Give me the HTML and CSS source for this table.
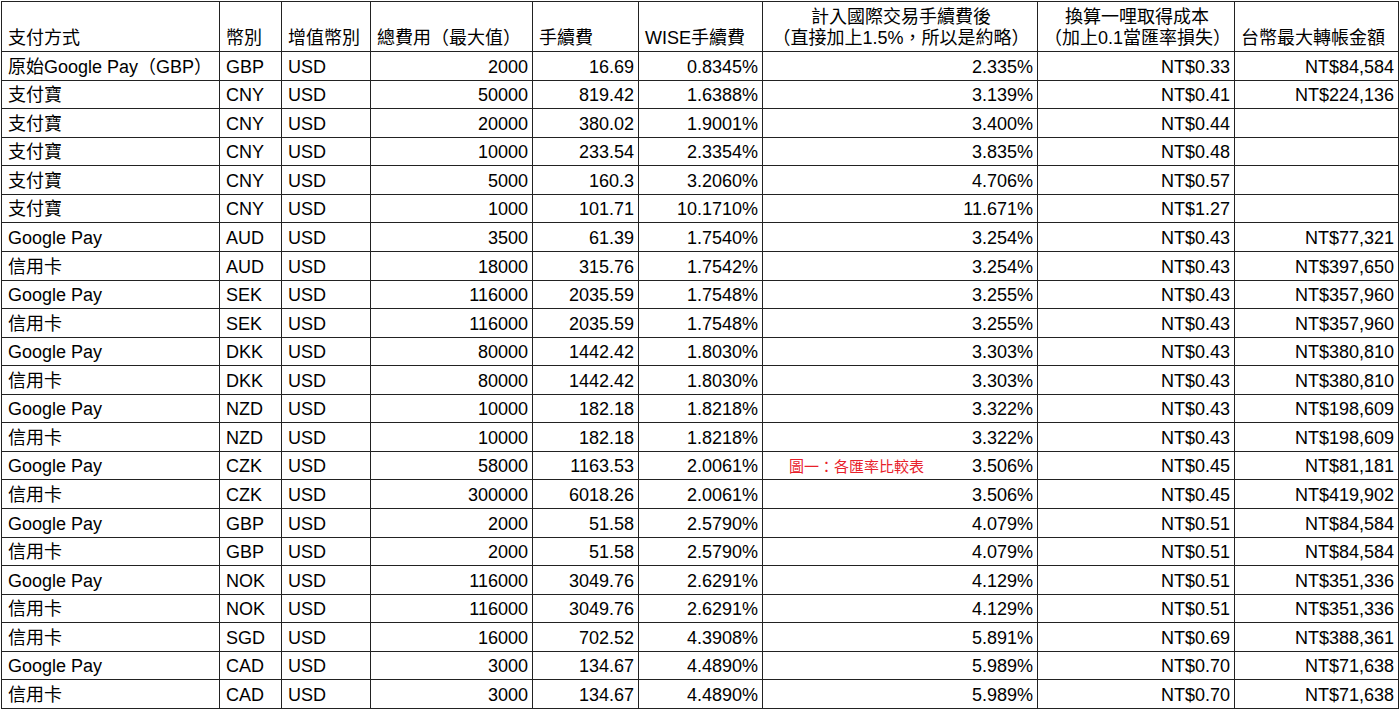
FILE: index.html
```html
<!DOCTYPE html>
<html lang="zh-Hant">
<head>
<meta charset="utf-8">
<title>各匯率比較表</title>
<link rel="stylesheet" href="styles.css">
</head>
<body>
<table class="sheet">
  <colgroup>
    <col class="c1"><col class="c2"><col class="c3"><col class="c4"><col class="c5"><col class="c6"><col class="c7"><col class="c8"><col class="c9">
  </colgroup>
  <thead>
    <tr class="head">
      <th>支付方式</th>
      <th>幣別</th>
      <th>增值幣別</th>
      <th>總費用（最大值）</th>
      <th>手續費</th>
      <th>WISE手續費</th>
      <th class="center">計入國際交易手續費後<br>（直接加上1.5%，所以是約略）</th>
      <th class="center">換算一哩取得成本<br>（加上0.1當匯率損失）</th>
      <th>台幣最大轉帳金額</th>
    </tr>
  </thead>
  <tbody>
    <tr><td>原始Google Pay（GBP）</td><td>GBP</td><td>USD</td><td class="num">2000</td><td class="num">16.69</td><td class="num">0.8345%</td><td class="num">2.335%</td><td class="num">NT$0.33</td><td class="num">NT$84,584</td></tr>
    <tr><td>支付寶</td><td>CNY</td><td>USD</td><td class="num">50000</td><td class="num">819.42</td><td class="num">1.6388%</td><td class="num">3.139%</td><td class="num">NT$0.41</td><td class="num">NT$224,136</td></tr>
    <tr><td>支付寶</td><td>CNY</td><td>USD</td><td class="num">20000</td><td class="num">380.02</td><td class="num">1.9001%</td><td class="num">3.400%</td><td class="num">NT$0.44</td><td class="num"></td></tr>
    <tr><td>支付寶</td><td>CNY</td><td>USD</td><td class="num">10000</td><td class="num">233.54</td><td class="num">2.3354%</td><td class="num">3.835%</td><td class="num">NT$0.48</td><td class="num"></td></tr>
    <tr><td>支付寶</td><td>CNY</td><td>USD</td><td class="num">5000</td><td class="num">160.3</td><td class="num">3.2060%</td><td class="num">4.706%</td><td class="num">NT$0.57</td><td class="num"></td></tr>
    <tr><td>支付寶</td><td>CNY</td><td>USD</td><td class="num">1000</td><td class="num">101.71</td><td class="num">10.1710%</td><td class="num">11.671%</td><td class="num">NT$1.27</td><td class="num"></td></tr>
    <tr><td>Google Pay</td><td>AUD</td><td>USD</td><td class="num">3500</td><td class="num">61.39</td><td class="num">1.7540%</td><td class="num">3.254%</td><td class="num">NT$0.43</td><td class="num">NT$77,321</td></tr>
    <tr><td>信用卡</td><td>AUD</td><td>USD</td><td class="num">18000</td><td class="num">315.76</td><td class="num">1.7542%</td><td class="num">3.254%</td><td class="num">NT$0.43</td><td class="num">NT$397,650</td></tr>
    <tr><td>Google Pay</td><td>SEK</td><td>USD</td><td class="num">116000</td><td class="num">2035.59</td><td class="num">1.7548%</td><td class="num">3.255%</td><td class="num">NT$0.43</td><td class="num">NT$357,960</td></tr>
    <tr><td>信用卡</td><td>SEK</td><td>USD</td><td class="num">116000</td><td class="num">2035.59</td><td class="num">1.7548%</td><td class="num">3.255%</td><td class="num">NT$0.43</td><td class="num">NT$357,960</td></tr>
    <tr><td>Google Pay</td><td>DKK</td><td>USD</td><td class="num">80000</td><td class="num">1442.42</td><td class="num">1.8030%</td><td class="num">3.303%</td><td class="num">NT$0.43</td><td class="num">NT$380,810</td></tr>
    <tr><td>信用卡</td><td>DKK</td><td>USD</td><td class="num">80000</td><td class="num">1442.42</td><td class="num">1.8030%</td><td class="num">3.303%</td><td class="num">NT$0.43</td><td class="num">NT$380,810</td></tr>
    <tr><td>Google Pay</td><td>NZD</td><td>USD</td><td class="num">10000</td><td class="num">182.18</td><td class="num">1.8218%</td><td class="num">3.322%</td><td class="num">NT$0.43</td><td class="num">NT$198,609</td></tr>
    <tr><td>信用卡</td><td>NZD</td><td>USD</td><td class="num">10000</td><td class="num">182.18</td><td class="num">1.8218%</td><td class="num">3.322%</td><td class="num">NT$0.43</td><td class="num">NT$198,609</td></tr>
    <tr><td>Google Pay</td><td>CZK</td><td>USD</td><td class="num">58000</td><td class="num">1163.53</td><td class="num">2.0061%</td><td class="num"><span class="caption">圖一：各匯率比較表</span>3.506%</td><td class="num">NT$0.45</td><td class="num">NT$81,181</td></tr>
    <tr><td>信用卡</td><td>CZK</td><td>USD</td><td class="num">300000</td><td class="num">6018.26</td><td class="num">2.0061%</td><td class="num">3.506%</td><td class="num">NT$0.45</td><td class="num">NT$419,902</td></tr>
    <tr><td>Google Pay</td><td>GBP</td><td>USD</td><td class="num">2000</td><td class="num">51.58</td><td class="num">2.5790%</td><td class="num">4.079%</td><td class="num">NT$0.51</td><td class="num">NT$84,584</td></tr>
    <tr><td>信用卡</td><td>GBP</td><td>USD</td><td class="num">2000</td><td class="num">51.58</td><td class="num">2.5790%</td><td class="num">4.079%</td><td class="num">NT$0.51</td><td class="num">NT$84,584</td></tr>
    <tr><td>Google Pay</td><td>NOK</td><td>USD</td><td class="num">116000</td><td class="num">3049.76</td><td class="num">2.6291%</td><td class="num">4.129%</td><td class="num">NT$0.51</td><td class="num">NT$351,336</td></tr>
    <tr><td>信用卡</td><td>NOK</td><td>USD</td><td class="num">116000</td><td class="num">3049.76</td><td class="num">2.6291%</td><td class="num">4.129%</td><td class="num">NT$0.51</td><td class="num">NT$351,336</td></tr>
    <tr><td>信用卡</td><td>SGD</td><td>USD</td><td class="num">16000</td><td class="num">702.52</td><td class="num">4.3908%</td><td class="num">5.891%</td><td class="num">NT$0.69</td><td class="num">NT$388,361</td></tr>
    <tr><td>Google Pay</td><td>CAD</td><td>USD</td><td class="num">3000</td><td class="num">134.67</td><td class="num">4.4890%</td><td class="num">5.989%</td><td class="num">NT$0.70</td><td class="num">NT$71,638</td></tr>
    <tr><td>信用卡</td><td>CAD</td><td>USD</td><td class="num">3000</td><td class="num">134.67</td><td class="num">4.4890%</td><td class="num">5.989%</td><td class="num">NT$0.70</td><td class="num">NT$71,638</td></tr>
  </tbody>
</table>
</body>
</html>
```
FILE: styles.css
```css
html, body {
  margin: 0;
  padding: 0;
  background: #fff;
}

body {
  padding: 1px 0 0 1px;
  font-family: "Liberation Sans", "Noto Sans CJK TC", sans-serif;
  font-size: 18px;
  color: #000;
}

.sheet {
  border-collapse: collapse;
  table-layout: fixed;
  width: 1398px;
}

.c1 { width: 218px; }
.c2 { width: 62px; }
.c3 { width: 89px; }
.c4 { width: 162px; }
.c5 { width: 106px; }
.c6 { width: 124px; }
.c7 { width: 275px; }
.c8 { width: 197px; }
.c9 { width: 164px; }

.sheet th,
.sheet td {
  border: 1px solid #222;
  padding: 0 4px 2px 6px;
  line-height: 21px;
  vertical-align: bottom;
  white-space: nowrap;
  overflow: hidden;
  font-weight: normal;
  text-align: left;
}

.head th {
  height: 47px;
}

.sheet th.center {
  text-align: center;
}

.sheet tbody td {
  height: 25.565px;
}

.sheet td.num {
  text-align: right;
}

.caption {
  float: left;
  margin-left: 20px;
  font-size: 15px;
  color: #e8202a;
}
```
